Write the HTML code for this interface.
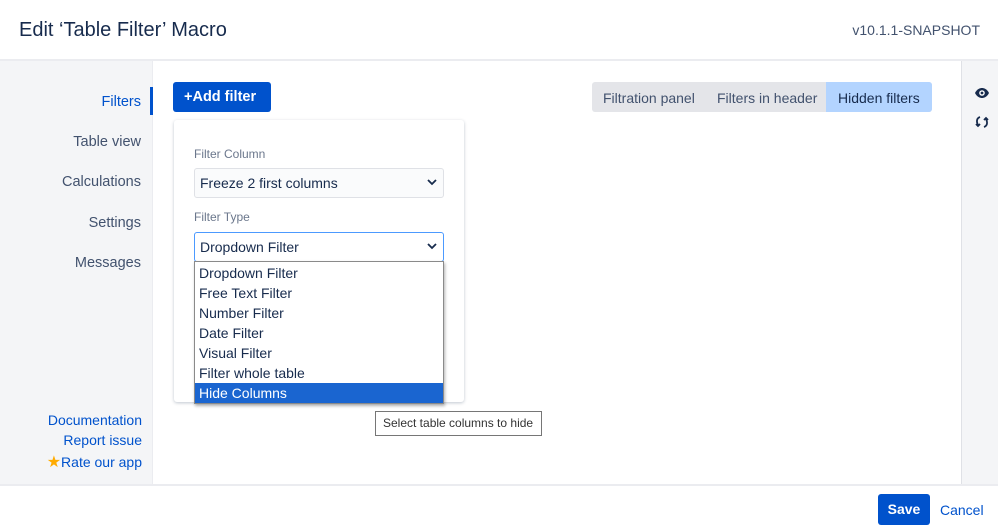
<!DOCTYPE html>
<html><head><style>
*{box-sizing:border-box;margin:0;padding:0}
body{width:998px;height:532px;position:relative;background:#fff;font-family:"Liberation Sans",sans-serif;overflow:hidden;color:#172b4d}
.abs{position:absolute}
.hdr{left:0;top:0;width:998px;height:61px;border-bottom:2px solid #ebecf0}
.side{left:0;top:61px;width:153px;height:423px;background:#f4f5f7;border-right:1px solid #ebecf0}
.rside{left:961px;top:61px;width:37px;height:423px;background:#f4f5f7;border-left:1px solid #dfe1e6}
.nav{right:12px;font-size:14.5px;color:#42526e;text-align:right}
.foot{left:0;top:484px;width:998px;height:2px;background:#ebecf0}
.link{color:#0052cc;font-size:14px;text-align:right;right:856px}
.sel{border:1px solid #dfe1e6;border-radius:3px;background:#fafbfc;font-size:14px;padding-left:5px;line-height:28px;color:#172b4d}
.chev{position:absolute;right:6px;top:9px}
.lbl{font-size:12px;color:#6b778c}
.opt{height:20px;line-height:20px;padding-left:4px;font-size:14px;color:#172b4d}
</style></head><body>
<div class="abs hdr"></div>
<div class="abs" style="left:19px;top:19px;font-size:20px;color:#172b4d">Edit ‘Table Filter’ Macro</div>
<div class="abs" style="right:18px;top:22px;font-size:14px;color:#42526e">v10.1.1-SNAPSHOT</div>
<div class="abs side"></div>
<div class="abs" style="left:150px;top:87px;width:3px;height:28px;background:#0052cc"></div>
<div class="abs nav" style="top:94px;right:857px;color:#0052cc">Filters</div>
<div class="abs nav" style="top:134px;right:857px">Table view</div>
<div class="abs nav" style="top:174px;right:857px">Calculations</div>
<div class="abs nav" style="top:215px;right:857px">Settings</div>
<div class="abs nav" style="top:255px;right:857px">Messages</div>
<div class="abs link" style="top:412px">Documentation</div>
<div class="abs link" style="top:432px">Report issue</div>
<div class="abs link" style="top:452px"><span style="color:#ffab00;font-size:16px">★</span>Rate our app</div>
<div class="abs rside"></div>
<svg class="abs" style="left:974px;top:86px" width="16" height="14" viewBox="0 0 16 14"><path d="M1 7C3 3 6 2 8 2s5 1 7 5c-2 4-5 5-7 5S3 11 1 7z" fill="#172b4d"/><circle cx="8" cy="7" r="2.8" fill="#fff"/><circle cx="8" cy="7" r="1.4" fill="#172b4d"/></svg>
<svg class="abs" style="left:975px;top:114px" width="14" height="16" viewBox="0 0 14 16" fill="none" stroke="#172b4d" stroke-width="1.8"><path d="M5 3C2 4 1 7 3 11"/><path d="M1 10l2 2 2-2"/><path d="M9 13c3-1 4-4 2-8"/><path d="M13 6l-2-2-2 2"/></svg>
<div class="abs" style="left:173px;top:82px;width:98px;height:30px;background:#0052cc;border-radius:3px;color:#fff;font-weight:bold;font-size:14.5px;line-height:30px;padding-left:11px">+Add filter</div>
<div class="abs" style="left:592px;top:82px;width:340px;height:30px;background:#e4e5e9;border-radius:3px"></div>
<div class="abs" style="left:826px;top:82px;width:106px;height:30px;background:#b3d4ff;border-radius:0 3px 3px 0"></div>
<div class="abs" style="left:603px;top:90px;font-size:14px;color:#42526e">Filtration panel</div>
<div class="abs" style="left:717px;top:90px;font-size:14px;color:#42526e">Filters in header</div>
<div class="abs" style="left:838px;top:90px;font-size:14px;color:#172b4d">Hidden filters</div>
<div class="abs" style="left:174px;top:120px;width:290px;height:282px;background:#fff;border-radius:3px;box-shadow:0 1px 3px rgba(9,30,66,.25)"></div>
<div class="abs lbl" style="left:194px;top:147px">Filter Column</div>
<div class="abs sel" style="left:194px;top:168px;width:250px;height:30px">Freeze 2 first columns<svg class="chev" width="10" height="8" viewBox="0 0 10 8"><path d="M1 2l4 4 4-4" stroke="#172b4d" stroke-width="1.8" fill="none"/></svg></div>
<div class="abs lbl" style="left:194px;top:210px">Filter Type</div>
<div class="abs sel" style="left:194px;top:232px;width:250px;height:30px;border:1px solid #4c9aff;background:#fff">Dropdown Filter<svg class="chev" width="10" height="8" viewBox="0 0 10 8"><path d="M1 2l4 4 4-4" stroke="#172b4d" stroke-width="1.8" fill="none"/></svg></div>
<div class="abs" style="left:194px;top:261px;width:250px;height:143px;background:#fff;border:1px solid #8a8a8a;box-shadow:1px 2px 3px rgba(0,0,0,.3);padding-top:1px">
<div class="opt">Dropdown Filter</div><div class="opt">Free Text Filter</div><div class="opt">Number Filter</div><div class="opt">Date Filter</div><div class="opt">Visual Filter</div><div class="opt">Filter whole table</div><div class="opt" style="background:#1a65d0;color:#fff">Hide Columns</div></div>
<div class="abs" style="left:375px;top:411px;width:167px;height:25px;border:1px solid #767676;background:#fff;font-size:12px;line-height:23px;padding-left:7px;color:#333">Select table columns to hide</div>
<div class="abs foot"></div>
<div class="abs" style="left:878px;top:494px;width:52px;height:31px;background:#0052cc;border-radius:3px;color:#fff;font-weight:bold;font-size:14px;line-height:31px;text-align:center">Save</div>
<div class="abs" style="left:940px;top:502px;font-size:14px;color:#0052cc">Cancel</div>
</body></html>
